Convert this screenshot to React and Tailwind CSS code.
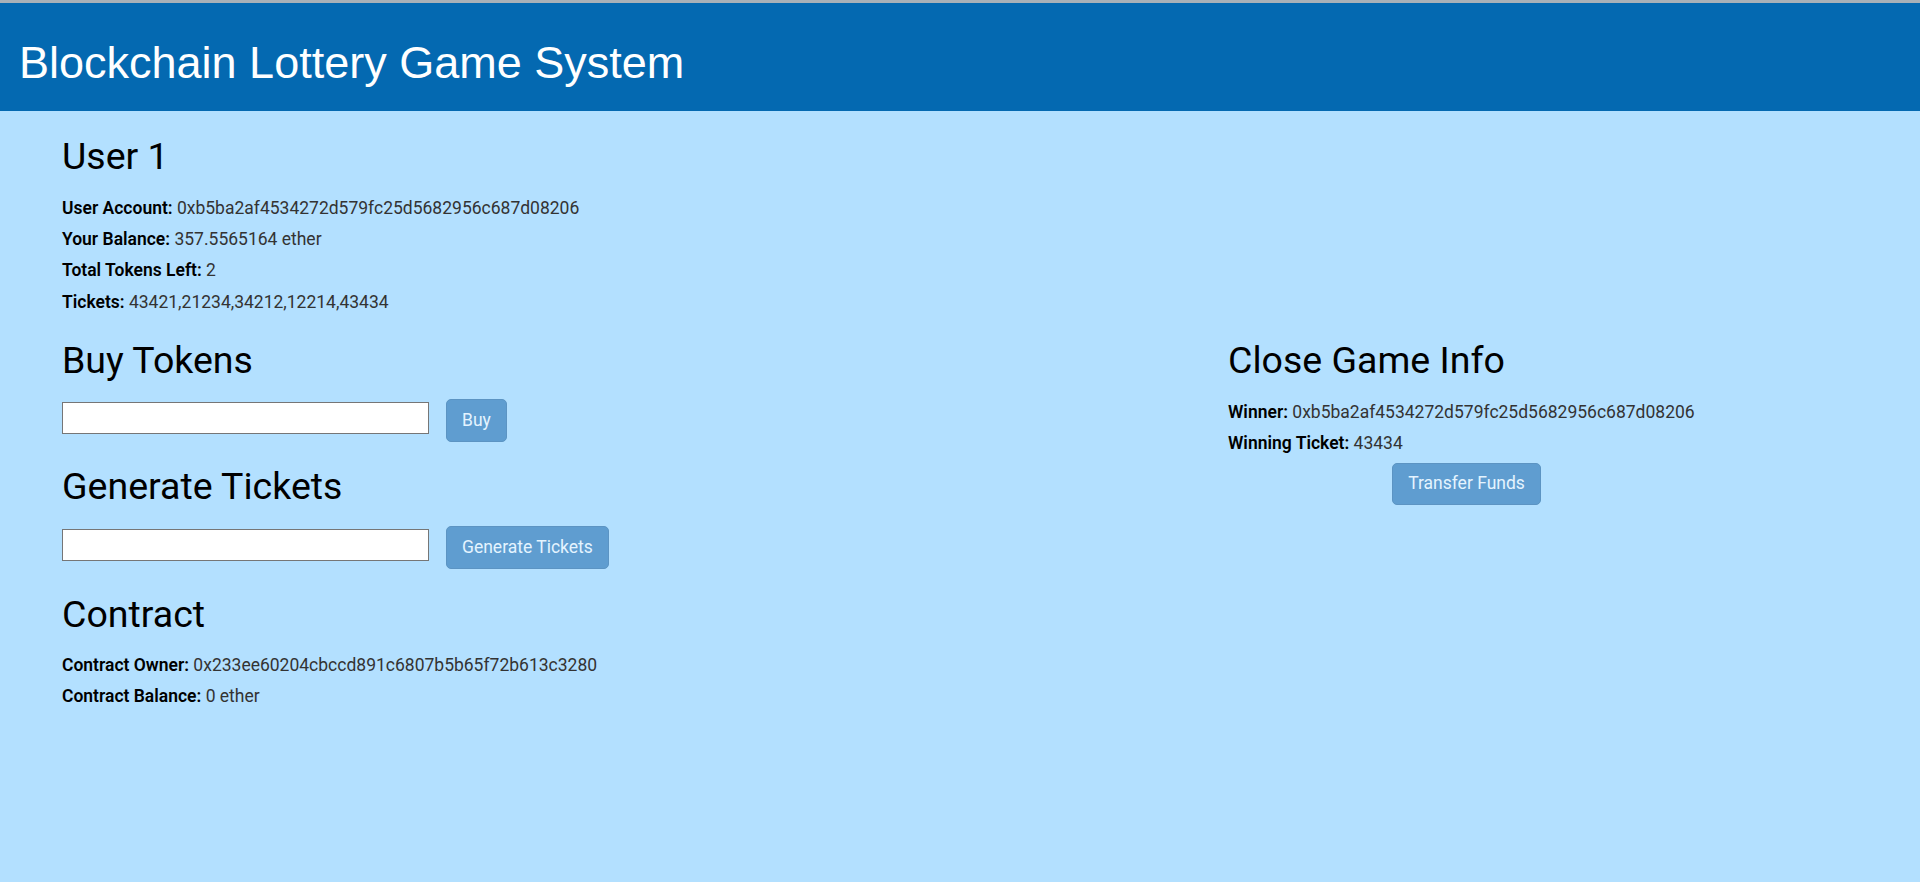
import React from 'react';

const Field = ({ label, value }) => (
  <div className="h-[25px] leading-[25px] text-[17.5px]">
    <span className="font-semibold text-black">{label}:</span>{' '}
    <span className="font-normal text-[#333]">{value}</span>
  </div>
);

const Heading = ({ children, className = '' }) => (
  <h2 className={`text-[37.5px] leading-[41.25px] font-normal text-black ${className}`}>{children}</h2>
);

const Btn = ({ children }) => (
  <button
    disabled
    className="h-[42.5px] px-[15px] rounded-[5px] border-[1.25px] border-[#2e6da4] bg-[#337ab7] text-white text-[17.5px] leading-[25px] opacity-65 cursor-not-allowed"
  >
    {children}
  </button>
);

const FormRow = ({ label, className = '' }) => (
  <div className={`flex items-start gap-[17px] ${className}`}>
    <input type="text" className="mt-[3px] w-[367px] h-[31.5px] bg-white border border-[#767676] px-1 outline-none" />
    <Btn>{label}</Btn>
  </div>
);

export default function App() {
  const account = '0xb5ba2af4534272d579fc25d5682956c687d08206';

  return (
    <div className="min-h-[882px] bg-[#b3e0ff] font-['Roboto',sans-serif]">
      <header className="h-[111px] border-t-[3px] border-[#a9b1b8] bg-[#0469b1] pl-[19px] pt-[34px]">
        <h1 className="text-[45px] leading-[52px] font-normal text-white font-['Liberation_Sans',Arial,sans-serif]">
          Blockchain Lottery Game System
        </h1>
      </header>

      <main className="pl-[62px] pt-[25px]">
        {/* User info */}
        <Heading>User 1</Heading>
        <div className="mt-[18.5px] flex flex-col gap-[6.25px]">
          <Field label="User Account" value={account} />
          <Field label="Your Balance" value="357.5565164 ether" />
          <Field label="Total Tokens Left" value="2" />
          <Field label="Tickets" value="43421,21234,34212,12214,43434" />
        </div>

        <div className="mt-[25px] flex">
          {/* Left column */}
          <div className="w-[1166px] shrink-0">
            <Heading>Buy Tokens</Heading>
            <FormRow label="Buy" className="mt-[18.5px]" />

            <Heading className="mt-[24px]">Generate Tickets</Heading>
            <FormRow label="Generate Tickets" className="mt-[19px]" />

            <Heading className="mt-[25px]">Contract</Heading>
            <div className="mt-[18px] flex flex-col gap-[6.25px]">
              <Field label="Contract Owner" value="0x233ee60204cbccd891c6807b5b65f72b613c3280" />
              <Field label="Contract Balance" value="0 ether" />
            </div>
          </div>

          {/* Right column */}
          <div className="w-[477px]">
            <Heading>Close Game Info</Heading>
            <div className="mt-[19px] flex flex-col gap-[6.25px]">
              <Field label="Winner" value={account} />
              <Field label="Winning Ticket" value="43434" />
            </div>
            <div className="mt-[6.5px] text-center">
              <Btn>Transfer Funds</Btn>
            </div>
          </div>
        </div>
      </main>
    </div>
  );
}
